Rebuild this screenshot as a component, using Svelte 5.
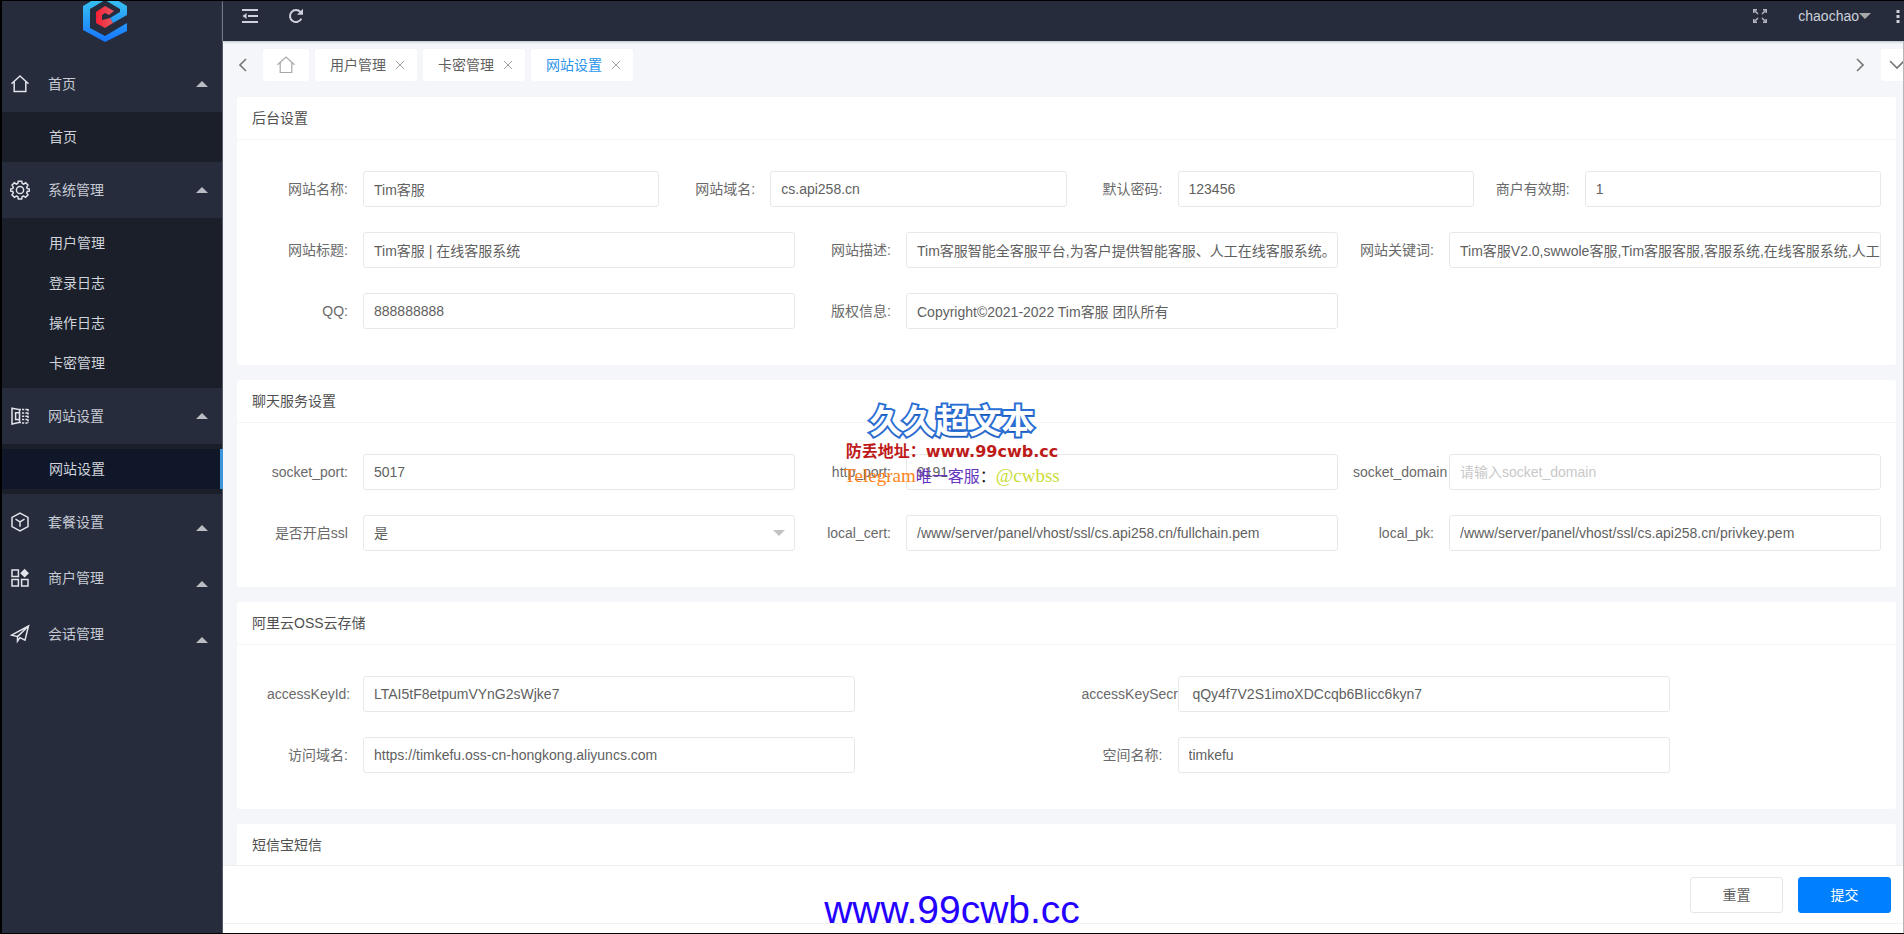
<script>
  const menu = [
    { title: '首页', icon: 'home', open: true, items: ['首页'] },
    { title: '系统管理', icon: 'gear', open: true, items: ['用户管理', '登录日志', '操作日志', '卡密管理'] },
    { title: '网站设置', icon: 'carousel', open: true, items: ['网站设置'], active: '网站设置' },
    { title: '套餐设置', icon: 'box', items: [] },
    { title: '商户管理', icon: 'grid', items: [] },
    { title: '会话管理', icon: 'plane', items: [] }
  ];

  const tabs = [
    { title: '用户管理' },
    { title: '卡密管理' },
    { title: '网站设置', active: true }
  ];

  const sections = [
    {
      title: '后台设置',
      rows: [
        {
          layout: 'four',
          fields: [
            { id: 'site_name', label: '网站名称:', value: 'Tim客服' },
            { id: 'site_host', label: '网站域名:', value: 'cs.api258.cn' },
            { id: 'default_password', label: '默认密码:', value: '123456' },
            { id: 'valid_days', label: '商户有效期:', value: '1' }
          ]
        },
        {
          layout: 'three',
          fields: [
            { id: 'site_title', label: '网站标题:', value: 'Tim客服 | 在线客服系统' },
            { id: 'site_desc', label: '网站描述:', value: 'Tim客服智能全客服平台,为客户提供智能客服、人工在线客服系统。' },
            { id: 'site_keywords', label: '网站关键词:', value: 'Tim客服V2.0,swwole客服,Tim客服客服,客服系统,在线客服系统,人工客服' },
            { id: 'qq', label: 'QQ:', value: '888888888' },
            { id: 'copyright', label: '版权信息:', value: 'Copyright©2021-2022 Tim客服 团队所有' }
          ]
        }
      ]
    },
    {
      title: '聊天服务设置',
      rows: [
        {
          layout: 'three',
          fields: [
            { id: 'socket_port', label: 'socket_port:', value: '5017' },
            { id: 'http_port', label: 'http_port:', value: '9191' },
            { id: 'socket_domain', label: 'socket_domain', value: '', placeholder: '请输入socket_domain' },
            { id: 'ssl', label: '是否开启ssl', value: '是', options: ['是', '否'] },
            { id: 'local_cert', label: 'local_cert:', value: '/www/server/panel/vhost/ssl/cs.api258.cn/fullchain.pem' },
            { id: 'local_pk', label: 'local_pk:', value: '/www/server/panel/vhost/ssl/cs.api258.cn/privkey.pem' }
          ]
        }
      ]
    },
    {
      title: '阿里云OSS云存储',
      rows: [
        {
          layout: 'two',
          fields: [
            { id: 'access_key_id', label: 'accessKeyId:', value: 'LTAI5tF8etpumVYnG2sWjke7' },
            { id: 'access_key_secret', label: 'accessKeySecret:', value: ' qQy4f7V2S1imoXDCcqb6BIicc6kyn7' },
            { id: 'endpoint', label: '访问域名:', value: 'https://timkefu.oss-cn-hongkong.aliyuncs.com' },
            { id: 'bucket', label: '空间名称:', value: 'timkefu' }
          ]
        }
      ]
    },
    { title: '短信宝短信', rows: [] }
  ];
</script>

{#snippet homeIcon()}
  <svg class="icon" viewBox="0 0 20 20" aria-hidden="true">
    <path d="M1.500 9.800 10 2l8.500 7.800M4.200 7.800V17.500h11.600V7.800" />
  </svg>
{/snippet}

{#snippet menuIcon(name)}
  {#if name === 'home'}
    {@render homeIcon()}
  {:else if name === 'gear'}
    <svg class="icon" viewBox="0 0 20 20" aria-hidden="true">
      <path d="M8.300 1.200h3.400l.5 2.300 1.400.6 2-1.300 2.400 2.400-1.300 2 .6 1.400 2.300.5v1.900l-2.300.5-.6 1.400 1.300 2-2.400 2.400-2-1.300-1.400.6-.5 2.300H8.300l-.5-2.300-1.400-.6-2 1.300L2 14.900l1.300-2-.6-1.400-2.300-.5V9.100l2.300-.5.6-1.400-1.300-2 2.400-2.400 2 1.300 1.400-.6z" />
      <circle cx="10" cy="10" r="3.600" />
    </svg>
  {:else if name === 'carousel'}
    <svg class="icon" viewBox="0 0 20 20" aria-hidden="true">
      <path d="M2 2.200 9.500 3.600V16.500L2 18zM8.500 3.600h2.500M8.500 16.500h2.500M5.600 6.800h4v6.800h-4z" />
      <path stroke-dasharray="2.200 1.200" d="M12 3.400h6M12 6.900h6M12 10.200h6M12 13.600h6M12 17h6M18 3v14" />
    </svg>
  {:else if name === 'box'}
    <svg class="icon" viewBox="0 0 20 20" aria-hidden="true">
      <path d="M10 1.200 18 5.400v9.200l-8 4.200-8-4.200V5.400zM5.500 7.200 10 9.800l4.500-2.600M10 9.800v5" />
    </svg>
  {:else if name === 'grid'}
    <svg class="icon" viewBox="0 0 20 20" aria-hidden="true">
      <path d="M2 2h6.400v6.400H2zM2 11.600h6.400V18H2zM11.600 11.600H18V18h-6.400z" />
      <path class="solid" d="m14.600.8 4.400 4.400-4.400 4.400-4.400-4.400z" />
    </svg>
  {:else}
    <svg class="icon" viewBox="0 0 20 20" aria-hidden="true">
      <path d="M1.500 11.200 18.500 2 15 16.200l-5-2.600-2.500 3.600v-4.600zM7.500 12.600 18.500 2" />
    </svg>
  {/if}
{/snippet}

<div class="app">
  <aside>
    <div class="logo">
      <svg viewBox="0 0 46 55" role="img" aria-label="Logo">
        <defs>
          <linearGradient id="shell" x1="0" y1="0" x2="0" y2="1">
            <stop offset="0.2" stop-color="#35bdf2" />
            <stop offset="1" stop-color="#1673ff" />
          </linearGradient>
          <linearGradient id="core" x1="0" y1="0" x2="1" y2="0">
            <stop offset="0" stop-color="#fb1f35" />
            <stop offset="1" stop-color="#e25a62" />
          </linearGradient>
        </defs>
        <path fill="url(#shell)" d="M23-8 45 5v9l-14 8-3-5 10-6V8L23-1 8 8v19l15 8 22-13v8L23 41 1 29V5z" />
        <path fill="url(#core)" d="M23 5l9 5-5 4-4-2-3 2v5l8-2 3 5-8 5-9-5V11z" />
      </svg>
    </div>
    <nav>
      {#each menu as group}
        <button class="group" class:closed={!group.open} type="button">
          {@render menuIcon(group.icon)}
          <span>{group.title}</span>
          <i class="caret"></i>
        </button>
        {#if group.items.length}
          <div class="sub">
            {#each group.items as item}
              <a href="#top" class:active={item === group.active}>{item}</a>
            {/each}
          </div>
        {/if}
      {/each}
    </nav>
  </aside>

  <div class="content">
    <header>
      <button type="button" aria-label="收起菜单">
        <svg viewBox="0 0 16 16" width="16" height="16"><path d="M0 2h16M6 8h10M0 14h16" /><path class="solid" d="m.5 8 4-3v6z" /></svg>
      </button>
      <button type="button" aria-label="刷新">
        <svg viewBox="0 0 16 16" width="16" height="16"><path d="M13.400 10.600A6 6 0 1 1 12.500 4" /><path class="solid" d="M15 .8v6H9z" /></svg>
      </button>
      <div class="spacer"></div>
      <button type="button" aria-label="全屏">
        <svg class="thin" viewBox="0 0 16 16" width="16" height="16">
          <path d="m2 2 4 4m8-4-4 4m-8 8 4-4m8 4-4-4" />
          <path d="M1.800 5V1.800H5M11 1.800h3.200V5M1.800 11v3.200H5M11 14.200h3.200V11" />
        </svg>
      </button>
      <button class="user" type="button">chaochao<i class="caret down"></i></button>
      <button class="more" type="button" aria-label="更多">
        <svg viewBox="0 0 4 16" width="4" height="16"><path class="solid" d="M.5 2h3v3h-3zM.5 7h3v3h-3zM.5 12h3v3h-3z" /></svg>
      </button>
    </header>

    <div class="tabs">
      <button class="arrow" type="button" aria-label="向左"><svg viewBox="0 0 8 14" width="8" height="14"><path d="M7 1 1 7l6 6" /></svg></button>
      <button class="tab home" type="button" aria-label="首页">{@render homeIcon()}</button>
      {#each tabs as tab}
        <button class="tab" class:active={tab.active} type="button">
          {tab.title}
          <svg class="close" viewBox="0 0 10 10" width="10" height="10"><path d="m1 1 8 8M9 1 1 9" /></svg>
        </button>
      {/each}
      <div class="spacer"></div>
      <button class="arrow next" type="button" aria-label="向右"><svg viewBox="0 0 8 14" width="8" height="14"><path d="m1 1 6 6-6 6" /></svg></button>
      <button class="dropdown" type="button" aria-label="标签操作"><svg viewBox="0 0 16 10" width="16" height="10"><path d="m1 1 7 7 7-7" /></svg></button>
    </div>

    <form onsubmit={(e) => e.preventDefault()}>
      <div class="cards">
        {#each sections as section}
          <section>
            <h2>{section.title}</h2>
            <div class="body">
              {#each section.rows as row}
                <div class="row {row.layout}">
                  {#each row.fields as field}
                    <div class="field">
                      <label for={field.id}>{field.label}</label>
                      <div class="control">
                        {#if field.options}
                          <select id={field.id} value={field.value}>
                            {#each field.options as option}<option>{option}</option>{/each}
                          </select>
                          <i class="caret down"></i>
                        {:else}
                          <input id={field.id} type="text" value={field.value} placeholder={field.placeholder} />
                        {/if}
                      </div>
                    </div>
                  {/each}
                </div>
              {/each}
            </div>
          </section>
        {/each}
      </div>
      <footer>
        <button type="reset">重置</button>
        <button class="primary" type="submit">提交</button>
      </footer>
    </form>
    <div class="strip"></div>
  </div>

  <div class="mark">
    <strong>久久超文本</strong>
    <b>防丢地址：www.99cwb.cc</b>
    <p><span class="orange">Telegram</span><span class="purple">唯一客服</span><span class="colon">：</span><span class="lime">@cwbss</span></p>
  </div>
  <div class="mark-url">www.99cwb.cc</div>
</div>

<style>
  :global(body) {
    margin: 0;
    background: #000;
  }

  .app,
  .app * {
    box-sizing: border-box;
  }

  .app {
    position: relative;
    display: flex;
    height: 100vh;
    overflow: hidden;
    border: solid #000;
    border-width: 1px 0 1px 2px;
    font: 14px/20px 'Liberation Sans', 'Noto Sans CJK SC', sans-serif;
    color: #5f5f5f;
  }

  button,
  input,
  select {
    font: inherit;
    color: inherit;
    margin: 0;
    padding: 0;
    border: 0;
    background: none;
  }

  svg {
    display: block;
    flex: none;
    fill: none;
    stroke: currentColor;
    stroke-width: 2;
  }

  .solid {
    fill: currentColor;
    stroke: none;
  }

  .icon {
    width: 20px;
    height: 20px;
    stroke-width: 1.500;
  }

  .caret {
    width: 0;
    height: 0;
    border: solid transparent;
    border-width: 0 6px 6px;
    border-bottom-color: #b9bcc3;
  }

  .caret.down {
    border-width: 6px 6px 0;
    border-top-color: #a5a7ab;
  }

  .spacer {
    flex: 1;
  }

  /* Sidebar */
  aside {
    flex: none;
    width: 221px;
    background: #262c3b;
    border-right: 1px solid #55596a;
    color: #c6cad4;
  }

  .logo {
    height: 55px;
    padding-left: 80px;
  }

  .logo svg {
    width: 46px;
    height: 55px;
    stroke: none;
  }

  .group {
    display: flex;
    align-items: center;
    width: 100%;
    height: 56px;
    padding: 0 14px 0 8px;
    text-align: left;
  }

  .group .icon {
    color: #e2e4ea;
  }

  .group span {
    flex: 1;
    padding-left: 18px;
  }

  .group.closed .caret {
    margin-top: 12px;
  }

  .sub {
    padding: 5px 0;
    background: #1a1f2a;
  }

  .sub a {
    display: block;
    padding: 10px 0 10px 47px;
    color: #d0d3da;
    text-decoration: none;
  }

  .sub .active {
    background: #0f1729;
    border-right: 3px solid #3e95dc;
    margin-right: -1px;
  }

  /* Main column */
  .content {
    flex: 1;
    min-width: 0;
    display: flex;
    flex-direction: column;
    background: #f4f6f9;
    border-right: 1px solid #b4b6ba;
  }

  header {
    flex: none;
    display: flex;
    align-items: center;
    height: 40px;
    margin-right: -1px;
    padding: 0 4px 10px 19px;
    background: #262c3b;
    color: #cdd1dc;
    box-shadow: 0 1px 2px #b9bdc4;
  }

  header > button:first-child {
    margin-right: 30px;
  }

  .thin {
    stroke-width: 1.500;
    color: #b4b8c2;
  }

  .user {
    display: flex;
    align-items: center;
    margin: 0 25px 0 30px;
  }

  .tabs {
    flex: none;
    display: flex;
    gap: 6px;
    padding: 8px 0 16px 16px;
  }

  .arrow {
    color: #777;
    width: 18px;
  }

  .arrow svg,
  .dropdown svg {
    stroke-width: 1.600;
  }

  .arrow.next {
    margin-right: 1px;
  }

  .tab,
  .dropdown {
    display: flex;
    align-items: center;
    height: 32px;
    padding: 0 12px 0 15px;
    gap: 9px;
    border-radius: 3px;
    background: #fff;
  }

  .tab.home {
    padding: 0 13px;
    color: #a8a8a8;
  }

  .tab.home :global(.icon) {
    stroke-width: 1.200;
  }

  .tab.active {
    color: #2a94ea;
  }

  .close {
    stroke-width: 1;
    color: #a0a0a0;
  }

  .dropdown {
    width: 22px;
    padding: 0 0 0 8px;
    overflow: hidden;
    color: #777;
    border-radius: 3px 0 0 3px;
  }

  form {
    flex: 1;
    min-height: 0;
    display: flex;
    flex-direction: column;
  }

  .cards {
    flex: 1;
    min-height: 0;
    overflow: hidden;
    padding: 0 7px 0 14px;
  }

  section {
    margin-bottom: 15px;
    background: #fff;
    border-radius: 3px;
  }

  h2 {
    margin: 0;
    padding: 11px 15px;
    border-bottom: 1px solid #f5f5f5;
    font-size: 14px;
    font-weight: 400;
    color: #505050;
  }

  .body {
    display: grid;
    gap: 25px;
    padding: 31px 15px 36px;
  }

  .row {
    display: grid;
    row-gap: 25px;
  }

  .four {
    grid-template-columns: repeat(4, 1fr);
  }

  .three {
    grid-template-columns: repeat(3, 1fr);
  }

  .two {
    grid-template-columns: repeat(2, 1fr);
  }

  .field {
    display: flex;
    min-width: 0;
  }

  .field label {
    flex: none;
    width: 111px;
    padding: 8px 15px;
    text-align: right;
    white-space: nowrap;
    color: #6a6a6a;
  }

  .control {
    position: relative;
    flex: 1;
    min-width: 0;
  }

  .two .control {
    flex: 0 1 70%;
    max-width: calc((100% - 111px) * 0.7);
  }

  .control input,
  .control select {
    display: block;
    width: 100%;
    height: 36px;
    padding-left: 10px;
    border: 1px solid #e8e8e8;
    border-radius: 3px;
    background: #fff;
    appearance: none;
  }

  .control input::placeholder {
    color: #c8c8c8;
  }

  .control .caret {
    position: absolute;
    right: 10px;
    top: 15px;
    border-top-color: #c2c2c2;
  }

  footer {
    flex: none;
    display: flex;
    justify-content: flex-end;
    gap: 15px;
    padding: 11px 12px 10px;
    border-top: 1px solid #eee;
    background: #fff;
  }

  footer button {
    width: 93px;
    height: 36px;
    border: 1px solid #e6e6e6;
    border-radius: 3px;
    background: #fff;
  }

  footer .primary {
    border-color: #007fff;
    background: #007fff;
    color: #fff;
  }

  .strip {
    flex: none;
    height: 10px;
    border-top: 1px solid #f1f1f1;
    background: #fff;
  }

  /* Overlaid site marks */
  .mark,
  .mark-url {
    position: absolute;
    left: 0;
    right: 2px;
    pointer-events: none;
    text-align: center;
  }

  .mark {
    top: 401px;
  }

  .mark strong,
  .mark b {
    display: block;
  }

  .mark strong {
    font-size: 33px;
    line-height: 40px;
    color: #fff;
    -webkit-text-stroke: 4px #2a6fd6;
    paint-order: stroke fill;
    text-shadow: 0 1px 0 #1f58b4;
  }

  .mark b {
    font-family: 'DejaVu Sans', 'Noto Sans CJK SC', sans-serif;
    font-size: 16px;
    line-height: 20px;
    color: #be1a1a;
  }

  .mark p {
    margin: 0;
    font-family: 'Liberation Serif', 'Noto Sans CJK SC', serif;
    font-size: 16px;
    line-height: 28px;
  }

  .orange,
  .lime {
    font-size: 19px;
  }

  .orange {
    color: #ff8420;
  }

  .purple {
    color: #6536bd;
  }

  .colon {
    color: #222;
  }

  .lime {
    color: #cbdc38;
  }

  .mark-url {
    bottom: 0;
    font-size: 39px;
    line-height: 46px;
    color: #2400ff;
  }
</style>
